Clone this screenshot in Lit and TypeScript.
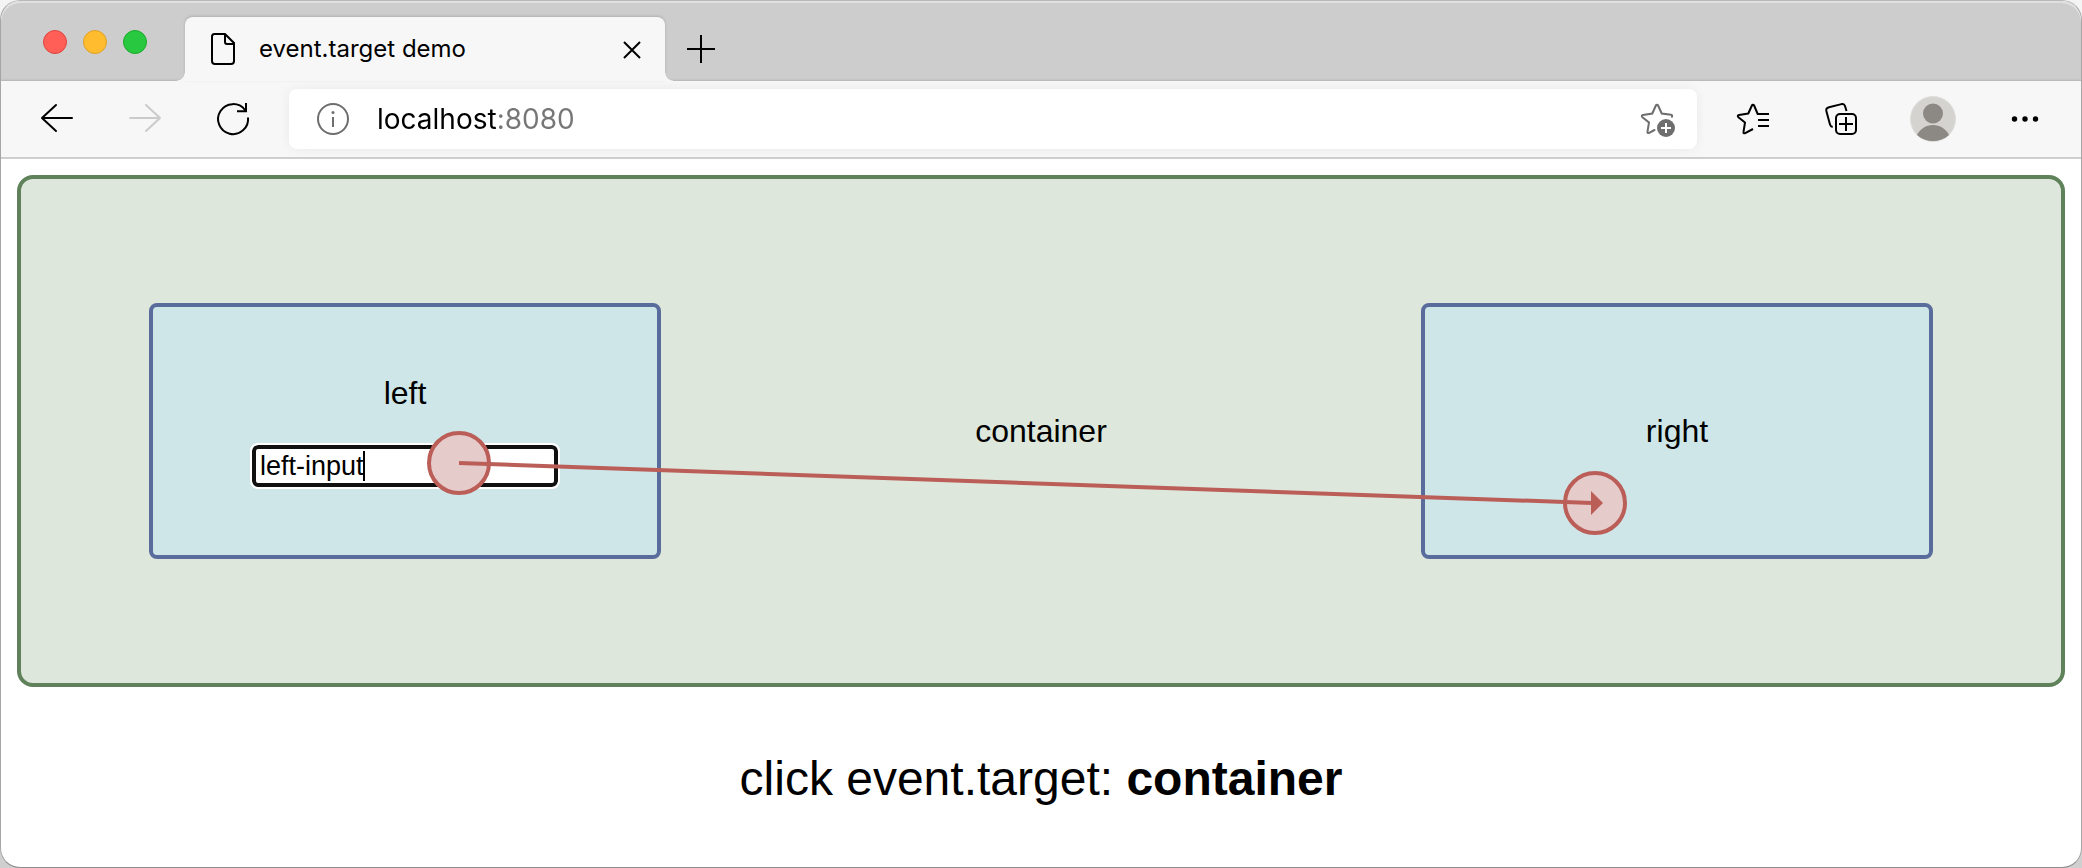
import { LitElement, html, css, svg } from "lit";
import { customElement, property, state } from "lit/decorators.js";

type IconName =
  | "page" | "close" | "plus" | "back" | "forward" | "reload" | "info"
  | "star-add" | "favorites" | "collections" | "avatar" | "more";

const icons: Record<IconName, unknown> = {
  page: svg`<path d="M11.500 5H22l9 9v18a3 3 0 0 1-3 3H12a3 3 0 0 1-3-3V7.500A2.500 2.500 0 0 1 11.500 5zM22 5v8a2 2 0 0 0 2 2h7"/>`,
  close: svg`<path d="M11 13l16 16M27 13L11 29"/>`,
  plus: svg`<path d="M20 6v28M6 20h28"/>`,
  back: svg`<path d="M35 19H5M19 6L5 19l14 13" stroke-linecap="round" stroke-linejoin="round"/>`,
  forward: svg`<path d="M5 19h30M21 6l14 13-14 13" stroke-linecap="round" stroke-linejoin="round"/>`,
  reload: svg`<path d="M35 18.500a15 15 0 1 1-3-7.500l1 1.300M33 4v8.300h-9"/>`,
  info: svg`<circle cx="20" cy="20" r="15"/><path d="M20 18v10"/><circle cx="20" cy="13.500" r="1.500" fill="currentColor" stroke="none"/>`,
  "star-add": svg`
    <path d="M15.500 31l-5.300 2.800c-1.200.600-2 .100-1.700-1.200L10 23.500l-6.600-5.300c-1-.900-.700-2 .600-2.200l9.300-1.500 3.600-8c.500-1.100 1.700-1.100 2.200 0l3.600 8 9.300 1.300c1.200.200 1.500.900.900 2" stroke-linecap="round"/>
    <circle cx="27" cy="29" r="9" fill="currentColor" stroke="none"/>
    <path d="M27 24v10M22 29h10" stroke="#fff"/>`,
  favorites: svg`
    <path d="M20 30l-7.800 4.100c-1.200.600-2 .100-1.700-1.200L12 23.500l-6.600-5.300c-1-.900-.700-2 .600-2.200l9.300-1.500 3.600-8c.500-1.100 1.700-1.100 2.200 0l3.600 8.500H36M25 21h11M25 27h11" stroke-linejoin="round"/>`,
  collections: svg`
    <rect x="15" y="15" width="20" height="20" rx="4"/><path d="M25 18v14M18 25h14"/>
    <path d="M25.500 12l-1.500-5c-.500-1.700-1.700-2.300-3.500-1.900L8 8.200c-2.200.500-3.200 2-2.600 4.100L9 25.500c.400 1.500 1.200 2.300 2.700 2.600"/>`,
  avatar: svg`
    <circle cx="23" cy="23" r="22.500" fill="#d4d3cf" stroke="#deddda" stroke-width="1"/>
    <circle cx="23" cy="17.500" r="10" fill="#8c8884" stroke="none"/>
    <path d="M7 39c3-6 9-10 16-10s13 4 16 10c-9 8-23 8-32 0z" fill="#8c8884" stroke="none"/>`,
  more: svg`<g fill="currentColor" stroke="none"><circle cx="9.500" cy="20" r="2.700"/><circle cx="20" cy="20" r="2.700"/><circle cx="30.500" cy="20" r="2.700"/></g>`,
};

@customElement("ui-icon")
class UiIcon extends LitElement {
  @property() name: IconName = "page";

  static styles = css`
    :host { display: block; flex: none; }
    .icon { display: block; fill: none; stroke: currentColor; stroke-width: 2; }
  `;

  render() {
    const size = this.name === "avatar" ? 46 : 40;
    return html`<svg class="icon" width=${size} height=${size} viewBox="0 0 ${size} ${size}" aria-hidden="true">${icons[this.name]}</svg>`;
  }
}

@customElement("browser-chrome")
class BrowserChrome extends LitElement {
  static styles = css`
    :host { display: block; font-family: Inter, "Liberation Sans", sans-serif; color: #000; }
    button {
      display: flex; align-items: center; justify-content: center;
      flex: none; margin: 0; padding: 0; border: 0; background: none; color: inherit;
    }
    .strip {
      display: flex; align-items: flex-end; height: 80px; background: #cdcdcd;
      border-radius: 20px 20px 0 0;
      box-shadow: inset 0 2px 0 #e0e0e0, inset 0 -2px 2px -1px #b4b4b4;
    }
    .lights { display: flex; gap: 16px; align-self: center; padding: 2px 38px 0 42px; }
    .light { width: 24px; height: 24px; border-radius: 50%; border: 1px solid #e0443e; background: #ff5f57; }
    .light, .tab, .address { box-sizing: border-box; }
    .minimise { background: #febc2e; border-color: #dea123; }
    .zoom { background: #28c840; border-color: #1aab29; }
    .tab {
      position: relative; display: flex; align-items: center; width: 480px; height: 64px;
      padding: 0 12px 0 18px; background: #f7f7f7; border-radius: 8px 8px 0 0;
      box-shadow: 0 -1px 3px rgba(0, 0, 0, 0.15);
    }
    .tab::before, .tab::after {
      content: ""; position: absolute; bottom: 0; width: 8px; height: 8px;
    }
    .tab::before { right: 100%; background: radial-gradient(circle at 0 0, transparent 7px, #f7f7f7 8px); }
    .tab::after { left: 100%; background: radial-gradient(circle at 100% 0, transparent 7px, #f7f7f7 8px); }
    .title { flex: 1; padding-left: 16px; font-size: 24px; line-height: 32px; white-space: nowrap; }
    .new { height: 64px; padding: 0 16px; }
    .toolbar {
      display: flex; align-items: center; height: 76px; padding: 0 12px;
      background: #f7f7f7; border-bottom: 2px solid #cecece;
    }
    .tool { width: 88px; height: 60px; }
    .disabled { color: #cbcbcb; }
    .profile { width: 96px; }
    .address {
      display: flex; align-items: center; flex: 1; min-width: 0; height: 60px; margin: 0 12px;
      padding: 0 18px 0 24px; background: #fff; border-radius: 8px; color: #6e6e6e;
      box-shadow: 0 0 12px rgba(0, 0, 0, 0.06);
    }
    .url {
      flex: 1; min-width: 0; margin: 0; padding: 0 0 0 24px; border: 0; outline: 0;
      font: 28px/36px Inter, "Liberation Sans", sans-serif; color: transparent;
      background: linear-gradient(to right, #000 144px, #767676 144px);
      -webkit-background-clip: text; background-clip: text;
    }
  `;

  render() {
    return html`
      <header>
        <div class="strip">
          <div class="lights">
            <button class="light" aria-label="Close window"></button>
            <button class="light minimise" aria-label="Minimise window"></button>
            <button class="light zoom" aria-label="Zoom window"></button>
          </div>
          <div class="tab">
            <ui-icon name="page"></ui-icon>
            <span class="title">event.target demo</span>
            <button aria-label="Close tab"><ui-icon name="close"></ui-icon></button>
          </div>
          <button class="new" aria-label="New tab"><ui-icon name="plus"></ui-icon></button>
        </div>
        <nav class="toolbar">
          <button class="tool" aria-label="Back"><ui-icon name="back"></ui-icon></button>
          <button class="tool disabled" aria-label="Forward" disabled><ui-icon name="forward"></ui-icon></button>
          <button class="tool" aria-label="Reload"><ui-icon name="reload"></ui-icon></button>
          <div class="address">
            <ui-icon name="info"></ui-icon>
            <input class="url" aria-label="Address" .value=${"localhost:8080"} spellcheck="false">
            <button aria-label="Add to favorites"><ui-icon name="star-add"></ui-icon></button>
          </div>
          <button class="tool" aria-label="Favorites"><ui-icon name="favorites"></ui-icon></button>
          <button class="tool" aria-label="Collections"><ui-icon name="collections"></ui-icon></button>
          <button class="tool profile" aria-label="Profile"><ui-icon name="avatar"></ui-icon></button>
          <button class="tool" aria-label="More"><ui-icon name="more"></ui-icon></button>
        </nav>
      </header>
    `;
  }
}

@customElement("app-root")
class AppRoot extends LitElement {
  @state() private target = "container";

  static styles = css`
    :host {
      display: block; color: #000;
      font-family: "Liberation Sans", Arial, sans-serif;
      background: linear-gradient(#f4f4f4, #cfcfcf);
    }
    .window {
      box-sizing: border-box; min-height: 100vh; background: #fff;
      border: 1px solid #a6a6a6; border-top-color: #b8b8b8; border-bottom-color: #8e8e8e;
      border-radius: 20px;
    }
    .page { padding: 16px; }
    .container {
      position: relative; box-sizing: border-box; min-height: 512px; padding: 0 128px;
      display: flex; align-items: center; justify-content: space-between;
      font-size: 32px; line-height: 36px;
      background: #dde7db; border: 4px solid #5f825b; border-radius: 16px;
    }
    .box {
      box-sizing: border-box; width: 512px; height: 256px;
      display: flex; flex-direction: column; align-items: center; justify-content: center; gap: 34px;
      background: #cee6e8; border: 4px solid #5a6c9b; border-radius: 8px;
    }
    .field { position: relative; display: flex; }
    .input {
      box-sizing: border-box; width: 306px; height: 42px; margin: 0; padding: 0 4px;
      font: 27px/32px "Liberation Sans", Arial, sans-serif; color: #000; background: #fff;
      border: 4px solid #101010; border-radius: 6px; outline: 2px solid #fff; caret-color: transparent;
    }
    .caret { position: absolute; left: 111px; top: 6px; width: 2px; height: 30px; background: #000; }
    .drag { position: absolute; left: -4px; top: -4px; width: calc(100% + 8px); height: calc(100% + 8px); pointer-events: none; }
    .dot { fill: #e6cbcb; stroke: #bb5e58; stroke-width: 4; }
    .line { stroke: #bb5e58; stroke-width: 4; }
    .arrow { fill: #bb5e58; }
    .status { margin: 64px 0 0; text-align: center; font-size: 48px; line-height: 55px; }
  `;

  private pick(name: string) {
    return (event: Event) => {
      event.stopPropagation();
      this.target = name;
    };
  }

  render() {
    return html`
      <div class="window">
        <browser-chrome></browser-chrome>
        <main class="page">
          <div class="container" @click=${this.pick("container")}>
            <div class="box" @click=${this.pick("left")}>
              <label for="left-input">left</label>
              <div class="field">
                <input class="input" id="left-input" .value=${"left-input"} spellcheck="false" @click=${this.pick("left-input")}>
                <span class="caret"></span>
              </div>
            </div>
            <span>container</span>
            <div class="box" @click=${this.pick("right")}>right</div>
            <svg class="drag" viewBox="0 0 2048 512" aria-hidden="true">
              <circle class="dot" cx="442" cy="288" r="30"/>
              <circle class="dot" cx="1578" cy="328" r="30"/>
              <path class="line" d="M442 288L1575 328"/>
              <path class="arrow" d="M1574 316l12 12-12 12z"/>
            </svg>
          </div>
          <p class="status">click event.target: <b>${this.target}</b></p>
        </main>
      </div>
    `;
  }
}
